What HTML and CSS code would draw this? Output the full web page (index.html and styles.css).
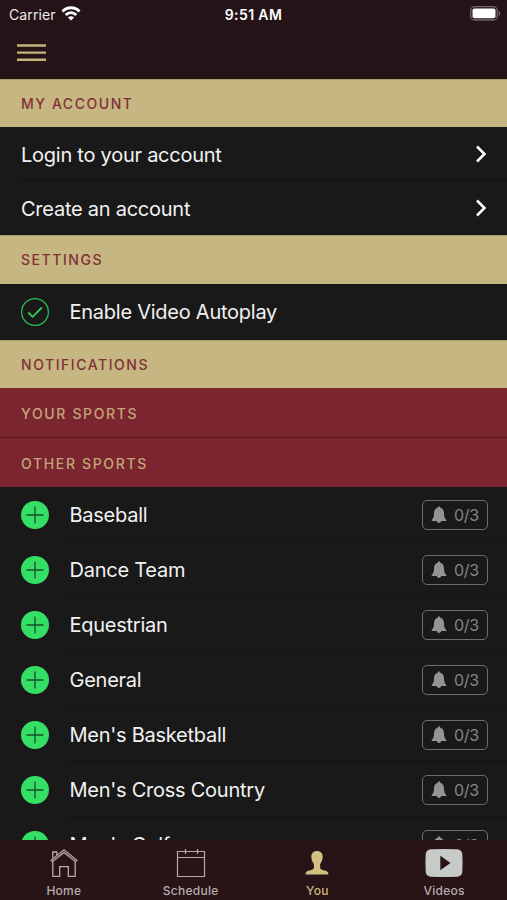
FILE: index.html
```html
<!DOCTYPE html>
<html lang="en">
<head>
<meta charset="utf-8">
<title>You</title>
<link rel="stylesheet" href="styles.css">
</head>
<body>
<svg class="defs" width="0" height="0">
  <symbol id="chevron" viewBox="0 0 12 18"><path d="M2 1.5 9.5 9 2 16.5" fill="none" stroke="#fff" stroke-width="2.5"/></symbol>
  <symbol id="plus" viewBox="0 0 28 28"><circle cx="14" cy="14" r="14" fill="#35df66"/><path d="M14 5.500v17M5.500 14h17" stroke="#17502a" stroke-width="1.300"/></symbol>
  <symbol id="bell" viewBox="0 0 16 18"><path d="M8 .5c.8 0 1.200.5 1.300 1.200 2.500.7 3.700 2.800 3.700 5.600 0 3.600.6 5 2.300 6.700v.9H.7V14C2.400 12.300 3 10.900 3 7.300c0-2.800 1.200-4.900 3.700-5.600C6.800 1 7.200.5 8 .5zM5.600 14.500h4.800c-.3 1.700-1.200 2.400-2.400 2.400s-2.100-.7-2.400-2.400z" fill="#949494"/></symbol>
</svg>
<div class="app">
  <header class="header">
    <div class="status">
      <div class="carrier"><span>Carrier</span>
        <svg width="20" height="15" viewBox="0 0 20 15"><g fill="none" stroke="#fff" stroke-width="2.800"><path d="M1.500 5.400C6.300.5 13.700.5 18.500 5.400"/><path d="M4.700 8.900c3-2.900 7.600-2.900 10.600 0"/></g><path d="M7 11.400c1.700-1.500 4.300-1.500 6 0l-3 3z" fill="#fff"/></svg>
      </div>
      <div class="time">9:51 AM</div>
      <svg class="battery" width="31" height="15" viewBox="0 0 31 15"><rect x=".7" y=".7" width="26.600" height="13.300" rx="4" fill="none" stroke="#75676a" stroke-width="1.300"/><rect x="2.500" y="2.500" width="23" height="9.700" rx="2" fill="#fff"/><path d="M28.700 5c2.100.8 2.100 4 0 4.800z" fill="#75676a"/></svg>
    </div>
    <svg class="menu" width="29" height="20" viewBox="0 0 29 20"><path d="M0 2.500h29M0 9.600h29M0 16.800h29" stroke="#c2b27b" stroke-width="2.400"/></svg>
  </header>
  <main class="content">
    <h2 class="section first"><span>MY ACCOUNT</span></h2>
    <div class="row link line"><span class="label">Login to your account</span><svg class="chev"><use href="#chevron"/></svg></div>
    <div class="row link"><span class="label">Create an account</span><svg class="chev"><use href="#chevron"/></svg></div>
    <h2 class="section"><span>SETTINGS</span></h2>
    <div class="row setting"><svg class="mark" viewBox="0 0 28 28"><circle cx="14" cy="14" r="13.400" fill="none" stroke="#29b957" stroke-width="1.300"/><path d="m7.300 14.500 4.300 4.300 9.300-9.300" fill="none" stroke="#2ccd5c" stroke-width="1.800"/></svg><span class="label">Enable Video Autoplay</span></div>
    <h2 class="section"><span>NOTIFICATIONS</span></h2>
    <h3 class="section maroon your"><span>YOUR SPORTS</span></h3>
    <h3 class="section maroon other"><span>OTHER SPORTS</span></h3>
    <div class="row sport"><svg class="mark"><use href="#plus"/></svg><span class="label">Baseball</span><span class="badge"><svg class="bell"><use href="#bell"/></svg>0/3</span></div>
    <div class="row sport"><svg class="mark"><use href="#plus"/></svg><span class="label">Dance Team</span><span class="badge"><svg class="bell"><use href="#bell"/></svg>0/3</span></div>
    <div class="row sport"><svg class="mark"><use href="#plus"/></svg><span class="label">Equestrian</span><span class="badge"><svg class="bell"><use href="#bell"/></svg>0/3</span></div>
    <div class="row sport"><svg class="mark"><use href="#plus"/></svg><span class="label">General</span><span class="badge"><svg class="bell"><use href="#bell"/></svg>0/3</span></div>
    <div class="row sport"><svg class="mark"><use href="#plus"/></svg><span class="label">Men's Basketball</span><span class="badge"><svg class="bell"><use href="#bell"/></svg>0/3</span></div>
    <div class="row sport"><svg class="mark"><use href="#plus"/></svg><span class="label">Men's Cross Country</span><span class="badge"><svg class="bell"><use href="#bell"/></svg>0/3</span></div>
    <div class="row sport"><svg class="mark"><use href="#plus"/></svg><span class="label">Men's Golf</span><span class="badge"><svg class="bell"><use href="#bell"/></svg>0/3</span></div>
  </main>
  <nav class="tabs">
    <div class="tab"><svg width="28" height="30" viewBox="0 0 28 30"><g fill="none" stroke="#b8a9ac" stroke-width="1.300"><path d="M1.200 12.300 14 1.800l12.800 10.500-1.200 1.400L14 4.400 2.400 13.700z"/><path d="M2.800 10.500V4h4v3M2.800 13.600v14.700h6.900V18.600h8.600v9.700h6.900V13.600"/></g></svg><span>Home</span></div>
    <div class="tab"><svg width="30" height="30" viewBox="0 0 30 30"><path d="M1.500 3.500h27v25h-27zM1.500 9.500h27M9.500 1v5M21.500 1v5" fill="none" stroke="#b8a9ac" stroke-width="1.200"/></svg><span>Schedule</span></div>
    <div class="tab active"><svg width="24" height="30" viewBox="0 0 24 30"><path d="M12 3c-3.600 0-5.700 2.300-5.700 5.600 0 3.200 1.100 5.300 2.600 7.600v3.300C8.900 23.400.5 21 .5 26.400h23c0-5.400-8.400-3-8.400-6.900v-3.300c1.500-2.300 2.600-4.400 2.600-7.600C17.700 5.300 15.600 3 12 3z" fill="#d2bf82"/></svg><span>You</span></div>
    <div class="tab"><svg width="38" height="30" viewBox="0 0 38 30"><path fill-rule="evenodd" d="M6 1.300Q19 .5 32 1.300q5 .3 5.300 5 .5 8.700 0 17.400-.3 4.700-5.300 5-13 .8-26 0-5-.3-5.300-5-.5-8.700 0-17.400Q1 1.600 6 1.300zM15.300 7.800v14.400L25.500 15z" fill="#c6cbc8"/></svg><span>Videos</span></div>
  </nav>
</div>
</body>
</html>
```
FILE: styles.css
```css
* { box-sizing: border-box; }
body { margin: 0; background: #191919; font-family: Inter, "Liberation Sans", sans-serif; }
svg { display: block; flex: none; }
.defs { position: absolute; }
.app { width: 507px; height: 900px; display: flex; flex-direction: column; overflow: hidden; }
.header { height: 79px; flex: none; background: #241417; color: #eee9ea; }
.status { height: 28px; display: grid; grid-template-columns: 1fr auto 1fr; align-items: center; padding: 0 6px 0 9px; font-size: 14px; }
.carrier { display: flex; align-items: center; gap: 6px; letter-spacing: .1px; }
.carrier svg { margin: -2px 0 0 -1px; }
.time { margin-left: -3px; font-weight: 600; color: #fff; letter-spacing: .4px; }
.battery { justify-self: end; margin-top: -1px; }
.menu { margin: 15px 0 0 17px; }
.content { flex: 1; min-height: 0; overflow: hidden; }
.section { height: 48.500px; margin: 0; padding-left: 21px; display: flex; align-items: center; background: #c6b681; color: #833137; font-size: 14px; font-weight: 500; letter-spacing: 1.550px; border-top: 1px solid #a99c70; }
.section.first { height: 48px; padding-bottom: 1px; }
.maroon { height: 49px; background: #7a2530; color: #c5a577; border-top: 0; }
.maroon.your { height: 50px; padding-top: 2px; border-bottom: 1px solid #591920; letter-spacing: 1.650px; }
.maroon.other { padding-top: 1px; letter-spacing: 1.650px; }
.row { display: flex; align-items: center; background: #191919; color: #f2f2f2; padding: 0 19px 0 21px; font-size: 20px; }
.link { height: 54px; }
.line { background: linear-gradient(#111, #111) 21px 100% / 100% 1px no-repeat #191919; }
.setting { height: 56px; }
.label { flex: 1; white-space: nowrap; letter-spacing: -.25px; padding-top: 1px; }
.chev { width: 12px; height: 18px; margin-right: 1px; }
.mark { width: 28px; height: 28px; margin-right: 20.500px; }
.sport { height: 55px; background: linear-gradient(#131313, #131313) 70px 100% / 100% 1px no-repeat #191919; }
.sport .label { padding-top: 0; }
.badge { width: 66px; height: 30px; border: 1.500px solid #6d6d6d; border-radius: 5px; display: flex; align-items: center; gap: 7px; padding-left: 8px; font-size: 16px; letter-spacing: -.3px; color: #858585; }
.bell { width: 16px; height: 18px; }
.tabs { height: 60px; flex: none; background: #281417; display: grid; grid-template-columns: repeat(4, 1fr); }
.tab { display: flex; flex-direction: column; align-items: center; padding: 8px 0 0 1px; gap: 5px; color: #b8adaf; font-size: 12px; font-weight: 500; line-height: 16px; letter-spacing: .25px; }
.tab.active { color: #cdb97e; }
```
